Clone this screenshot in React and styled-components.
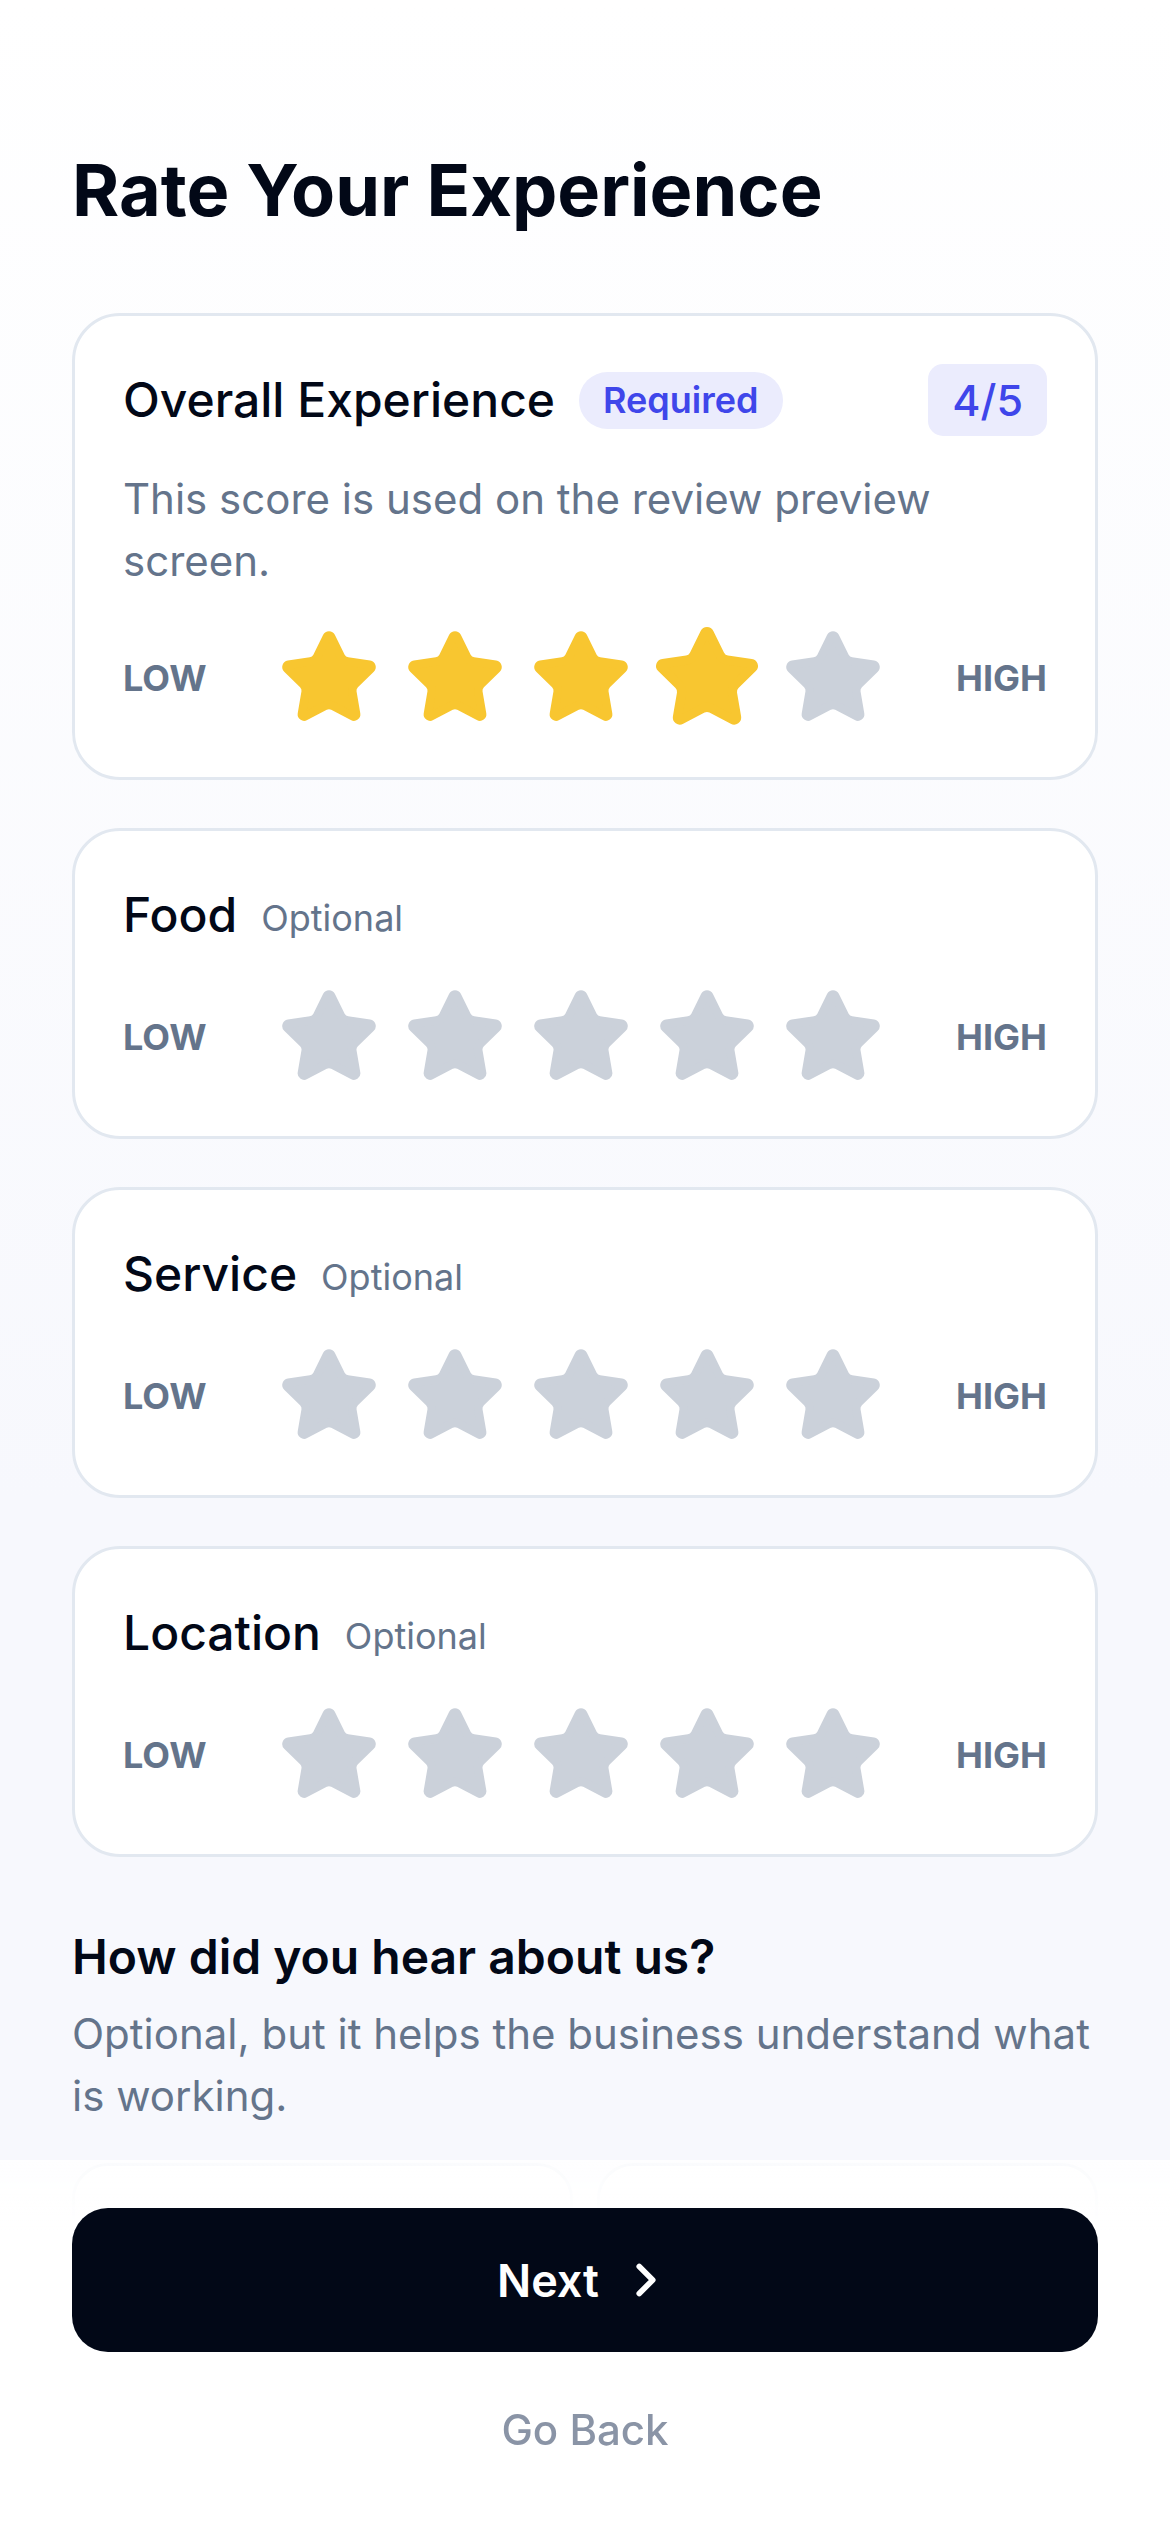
import React from 'react';
import styled, { createGlobalStyle } from 'styled-components';
import { Star, ChevronRight } from 'lucide-react';

const GlobalStyle = createGlobalStyle`
  * {
    box-sizing: border-box;
  }
  body {
    margin: 0;
    font-family: Inter, 'Noto Sans', 'Liberation Sans', sans-serif;
    background: #ffffff;
    -webkit-font-smoothing: antialiased;
  }
`;

const categories = [
  { id: 'overall', title: 'Overall Experience', required: true, value: 4 },
  { id: 'food', title: 'Food', value: 0 },
  { id: 'service', title: 'Service', value: 0 },
  { id: 'location', title: 'Location', value: 0 },
];

const sources = ['Google Search', 'Instagram'];

function StarScale({ value, onChange }) {
  return (
    <StarRow>
      <ScaleLabel>LOW</ScaleLabel>
      <Stars>
        {[1, 2, 3, 4, 5].map(n => {
          const filled = n <= value;
          const color = filled ? '#f8c630' : '#cbd1da';
          return (
            <StarButton
              key={n}
              $active={n === value}
              onClick={() => onChange(n)}
              aria-label={`${n} stars`}
            >
              <Star size={102} color={color} fill={color} strokeWidth={2} />
            </StarButton>
          );
        })}
      </Stars>
      <ScaleLabel>HIGH</ScaleLabel>
    </StarRow>
  );
}

const App = () => {
  const [ratings, setRatings] = React.useState(
    Object.fromEntries(categories.map(c => [c.id, c.value])),
  );

  return (
    <>
      <GlobalStyle />
      <Page>
        <Title>Rate Your Experience</Title>
        <CardList>
          {categories.map(cat => (
            <RatingCard key={cat.id}>
              <CardHeader>
                <CardTitle>{cat.title}</CardTitle>
                {cat.required ? (
                  <RequiredPill>Required</RequiredPill>
                ) : (
                  <OptionalTag>Optional</OptionalTag>
                )}
                {cat.required && <ScoreBadge>{ratings[cat.id]}/5</ScoreBadge>}
              </CardHeader>
              {cat.required && (
                <Description>
                  This score is used on the review preview screen.
                </Description>
              )}
              <StarScale
                value={ratings[cat.id]}
                onChange={n => setRatings(r => ({ ...r, [cat.id]: n }))}
              />
            </RatingCard>
          ))}
        </CardList>

        <Section>
          <SectionTitle>How did you hear about us?</SectionTitle>
          <SectionText>
            Optional, but it helps the business understand what is working.
          </SectionText>
          <SourceGrid>
            {sources.map(s => (
              <SourceOption key={s}>{s}</SourceOption>
            ))}
          </SourceGrid>
        </Section>
      </Page>

      <Footer>
        <NextButton>
          Next
          <ChevronRight size={54} strokeWidth={2.5} />
        </NextButton>
        <BackButton>Go Back</BackButton>
      </Footer>
    </>
  );
};

const Page = styled.main`
  padding: 147px 72px 420px;
  background: linear-gradient(180deg, #ffffff 0px, #f7f8fd 1500px);
`;

const Title = styled.h1`
  margin: 0 0 80px;
  font-size: 72px;
  line-height: 1.2;
  font-weight: 700;
  color: #020817;
`;

const CardList = styled.div`
  display: flex;
  flex-direction: column;
  gap: 48px;
`;

const RatingCard = styled.section`
  background: #ffffff;
  border: 3px solid #e2e8f0;
  border-radius: 48px;
  padding: 48px;
`;

const CardHeader = styled.div`
  display: flex;
  align-items: center;
  gap: 24px;
  min-height: 72px;
`;

const CardTitle = styled.h2`
  margin: 0;
  font-size: 48px;
  line-height: 60px;
  font-weight: 500;
  color: #020817;
`;

const RequiredPill = styled.span`
  padding: 0 24px;
  border-radius: 999px;
  background: #ebecfd;
  color: #3f46ea;
  font-size: 36px;
  line-height: 57px;
  font-weight: 600;
`;

const OptionalTag = styled.span`
  color: #64748b;
  font-size: 36px;
  line-height: 48px;
  font-weight: 400;
  padding-top: 6px;
`;

const ScoreBadge = styled.span`
  margin-left: auto;
  align-self: flex-start;
  padding: 12px 24px;
  border-radius: 15px;
  background: #ebecfd;
  color: #3f46ea;
  font-size: 43px;
  line-height: 48px;
  font-weight: 500;
`;

const Description = styled.p`
  margin: 32px 0 0;
  color: #64748b;
  font-size: 42px;
  line-height: 62px;
`;

const StarRow = styled.div`
  display: flex;
  align-items: center;
  justify-content: space-between;
  margin-top: 35px;
`;

const ScaleLabel = styled.span`
  color: #64748b;
  font-size: 36px;
  font-weight: 700;
  line-height: 1;
`;

const Stars = styled.div`
  display: flex;
  gap: 24px;
`;

const StarButton = styled.button`
  display: flex;
  width: 102px;
  height: 102px;
  padding: 0;
  border: none;
  background: none;
  cursor: pointer;
  transform: ${({ $active }) => ($active ? 'scale(1.09)' : 'none')};

  svg {
    stroke-linejoin: round;
  }
`;

const Section = styled.div`
  margin-top: 69px;
`;

const SectionTitle = styled.h3`
  margin: 0;
  font-size: 48px;
  line-height: 62px;
  font-weight: 600;
  color: #020817;
`;

const SectionText = styled.p`
  margin: 15px 0 0;
  color: #64748b;
  font-size: 42px;
  line-height: 62px;
`;

const SourceGrid = styled.div`
  display: grid;
  grid-template-columns: 1fr 1fr;
  gap: 24px;
  margin-top: 36px;
`;

const SourceOption = styled.button`
  height: 132px;
  border: 3px solid #e2e8f0;
  border-radius: 36px;
  background: #ffffff;
  color: #334155;
  font-family: inherit;
  font-size: 42px;
  font-weight: 500;
`;

const Footer = styled.footer`
  position: fixed;
  left: 0;
  right: 0;
  bottom: 0;
  padding: 48px 72px 72px;
  background: linear-gradient(
    180deg,
    rgba(255, 255, 255, 0.82) 0px,
    #ffffff 70px
  );
`;

const NextButton = styled.button`
  display: flex;
  align-items: center;
  justify-content: center;
  gap: 20px;
  width: 100%;
  height: 144px;
  border: none;
  border-radius: 36px;
  background: #020817;
  color: #ffffff;
  font-family: inherit;
  font-size: 45px;
  font-weight: 600;
  cursor: pointer;
`;

const BackButton = styled.button`
  display: block;
  width: 100%;
  margin-top: 48px;
  padding: 0;
  border: none;
  background: none;
  color: #8a94a6;
  font-family: inherit;
  font-size: 42px;
  line-height: 60px;
  font-weight: 500;
  cursor: pointer;
`;

export default App;
